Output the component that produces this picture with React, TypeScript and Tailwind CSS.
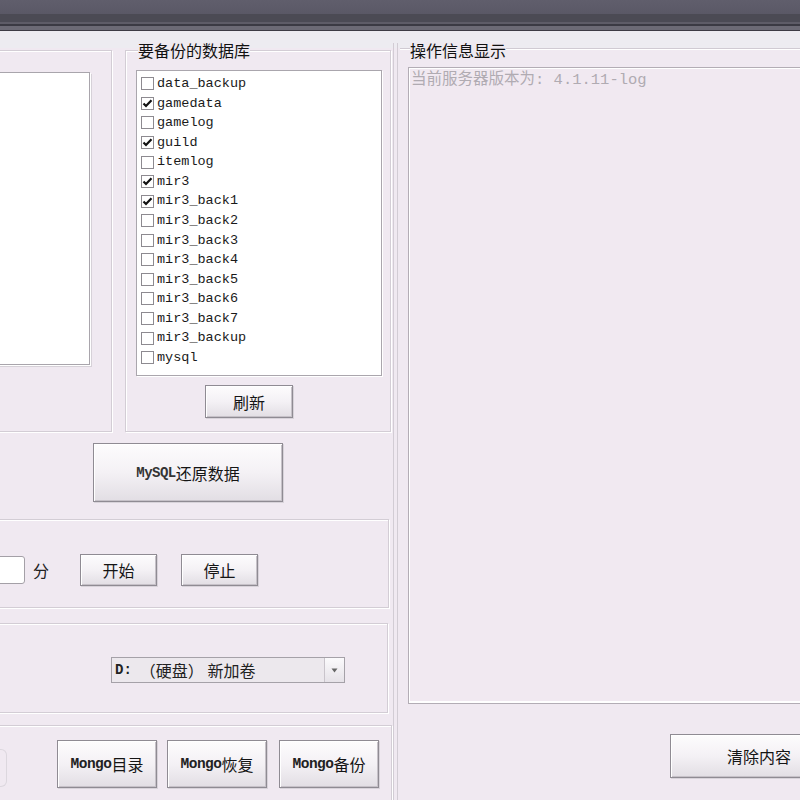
import React from "react";

const items: [string, boolean][] = [
  ["data_backup", false],
  ["gamedata", true],
  ["gamelog", false],
  ["guild", true],
  ["itemlog", false],
  ["mir3", true],
  ["mir3_back1", true],
  ["mir3_back2", false],
  ["mir3_back3", false],
  ["mir3_back4", false],
  ["mir3_back5", false],
  ["mir3_back6", false],
  ["mir3_back7", false],
  ["mir3_backup", false],
  ["mysql", false],
];

function Check({ on }: { on: boolean }) {
  return (
    <div className="w-[13px] h-[13px] shrink-0 border border-[#8d8a90] bg-white flex items-center justify-center">
      {on && (
        <svg width="11" height="11" viewBox="0 0 11 11">
          <path d="M1.5 5.5 L4 8 L9.5 2.2" fill="none" stroke="#111" strokeWidth="2.2" />
        </svg>
      )}
    </div>
  );
}

function Btn({ className, children }: { className: string; children: React.ReactNode }) {
  return (
    <div
      className={
        "flex items-center justify-center shrink-0 border border-[#8f8b93] bg-gradient-to-b from-[#fdfcfd] via-[#f4f1f5] to-[#e2dee4] shadow-[inset_1px_1px_0_#ffffff,inset_-1px_-1px_0_#c6c1c8,1px_1px_0_#d8d3da] text-[16px] leading-none text-[#151515] font-['Noto_Sans_CJK_SC',sans-serif] " +
        className
      }
    >
      {children}
    </div>
  );
}

export default function App() {
  return (
    <div className="w-[800px] h-[800px] overflow-hidden bg-[#f0e9f1] flex flex-col font-['Noto_Sans_CJK_SC',sans-serif]">
      {/* title bar */}
      <div className="h-[31px] shrink-0 flex flex-col">
        <div className="h-[14px] bg-gradient-to-b from-[#605e6c] to-[#5a5866]" />
        <div className="h-[8px] bg-[#4b4a54]" />
        <div className="h-[2px] bg-[#5e5c67]" />
        <div className="h-[2px] bg-[#3b3a43]" />
        <div className="h-[4px] bg-[#6c6a75]" />
        <div className="h-[1px] bg-[#3d3c45]" />
      </div>

      <div className="flex h-[769px] shrink-0 bg-[linear-gradient(to_bottom,#edecf1_0px,#edecf1_17px,#f0e9f1_17px)]">
        {/* left column */}
        <div className="w-[393px] shrink-0 flex flex-col pt-[19px]">
          <div className="flex h-[382px] shrink-0">
            {/* left group */}
            <div className="ml-[-10px] w-[122px] h-full shrink-0 border border-[#d3cdd5] shadow-[inset_1px_1px_0_#ffffff,1px_1px_0_#ffffff] pt-[21px]">
              <div className="w-[99px] h-[293px] bg-white border border-[#a9a5ac] shadow-[1px_1px_0_#ffffff,2px_2px_0_#d6d1d8]" />
            </div>
            {/* middle group */}
            <div className="relative ml-[13px] w-[266px] h-full shrink-0 border border-[#d3cdd5] shadow-[inset_1px_1px_0_#ffffff,1px_1px_0_#ffffff] pt-[19px] pl-[10px] flex flex-col">
              <span className="absolute left-[12px] top-[-9px] leading-[16px] text-[16px] text-[#111] bg-[#eeeaf0]">
                要备份的数据库
              </span>
              <div className="w-[246px] h-[306px] shrink-0 bg-white border border-[#aaa6ad] shadow-[1px_1px_0_#ffffff] pt-[3px] pl-[4px] flex flex-col font-['Liberation_Mono','Noto_Sans_CJK_SC',monospace] text-[13.5px] text-[#1a1a1a]">
                {items.map(([name, on]) => (
                  <div key={name} className="h-[19.57px] shrink-0 flex items-center gap-[3px]">
                    <Check on={on} />
                    <span className="leading-none">{name}</span>
                  </div>
                ))}
              </div>
              <Btn className="mt-[9px] ml-[69px] w-[88px] h-[33px]">刷新</Btn>
            </div>
          </div>

          <Btn className="mt-[11px] ml-[93px] w-[190px] h-[59px] text-[15.5px]">
            <span className="font-['Liberation_Mono',monospace] font-bold text-[14px] tracking-[-0.5px] text-[#333]">MySQL</span>
            <span>还原数据</span>
          </Btn>

          {/* group 2 */}
          <div className="mt-[17px] ml-[-10px] w-[399px] h-[89px] shrink-0 border border-[#d3cdd5] shadow-[inset_1px_1px_0_#ffffff,1px_1px_0_#ffffff] pt-[12px] flex items-center">
            <div className="w-[34px] h-[28px] shrink-0 bg-white border border-[#a4a0a7] rounded-[3px]" />
            <span className="ml-[8px] text-[16px] text-[#222] leading-none">分</span>
            <Btn className="ml-[31px] w-[77px] h-[32px]">开始</Btn>
            <Btn className="ml-[24px] w-[77px] h-[32px]">停止</Btn>
          </div>

          {/* group 3 */}
          <div className="mt-[15px] ml-[-10px] w-[398px] h-[90px] shrink-0 border border-[#d3cdd5] shadow-[inset_1px_1px_0_#ffffff,1px_1px_0_#ffffff] pt-[4px] flex items-center">
            <div className="ml-[120px] w-[234px] h-[26px] shrink-0 border border-[#a5a1a8] bg-[#ece8ed] flex items-center">
              <span className="pl-[3px] font-['Liberation_Mono',monospace] font-bold text-[14px] text-[#222]">D:</span>
              <span className="ml-[8px] text-[16px] text-[#222] leading-none whitespace-pre">（硬盘） 新加卷</span>
              <div className="ml-auto w-[20px] h-full border-l border-[#c9c4cb] bg-gradient-to-b from-[#fbfafc] to-[#e6e2e8] flex items-center justify-center">
                <svg width="7" height="5" viewBox="0 0 7 5">
                  <path d="M0.5 0.5 L6.5 0.5 L3.5 4.5 Z" fill="#666" />
                </svg>
              </div>
            </div>
          </div>

          {/* group 4 */}
          <div className="mt-[12px] ml-[-10px] w-[402px] h-[100px] shrink-0 border border-[#d3cdd5] shadow-[inset_1px_1px_0_#ffffff,1px_1px_0_#ffffff] pt-[14px] flex items-start">
            <div className="mt-[9px] ml-[2px] w-[14px] h-[38px] shrink-0 rounded-r-[6px] border border-l-0 border-[#dcd7de]" />
            <Btn className="ml-[50px] w-[100px] h-[48px]">
              <span className="font-['Liberation_Mono',monospace] font-bold text-[14.5px] tracking-[-0.5px] text-[#222]">Mongo</span>
              <span>目录</span>
            </Btn>
            <Btn className="ml-[10px] w-[100px] h-[48px]">
              <span className="font-['Liberation_Mono',monospace] font-bold text-[14.5px] tracking-[-0.5px] text-[#222]">Mongo</span>
              <span>恢复</span>
            </Btn>
            <Btn className="ml-[12px] w-[100px] h-[48px]">
              <span className="font-['Liberation_Mono',monospace] font-bold text-[14.5px] tracking-[-0.5px] text-[#222]">Mongo</span>
              <span>备份</span>
            </Btn>
          </div>
        </div>

        {/* splitter */}
        <div className="w-[5px] shrink-0 mt-[12px] border-l border-r border-[#d2ccd4]" />

        {/* right column */}
        <div className="flex-1 min-w-0 pt-[17px] pl-[2px] flex flex-col">
          <div className="relative w-[420px] shrink-0 border-t border-[#d0cbd3] shadow-[inset_0_1px_0_#ffffff] pt-[18px] pl-[8px]">
            <span className="absolute left-[10px] top-[-7px] leading-[16px] text-[16px] text-[#111] bg-[#eeeaf0]">
              操作信息显示
            </span>
            <div className="w-[420px] h-[637px] border border-[#b3adb5] shadow-[inset_1px_1px_0_#ffffff,inset_-1px_-2px_0_#ffffff] bg-[#f1e9f1] pt-[4px] pl-[2px] flex flex-col">
              <span className="font-['Liberation_Mono','Noto_Sans_CJK_SC',monospace] text-[15.5px] text-[#b0abb2] leading-[16px]">
                当前服务器版本为: 4.1.11-log
              </span>
            </div>
          </div>
          <Btn className="mt-[30px] ml-[270px] w-[178px] h-[44px]">清除内容</Btn>
        </div>
      </div>
    </div>
  );
}
